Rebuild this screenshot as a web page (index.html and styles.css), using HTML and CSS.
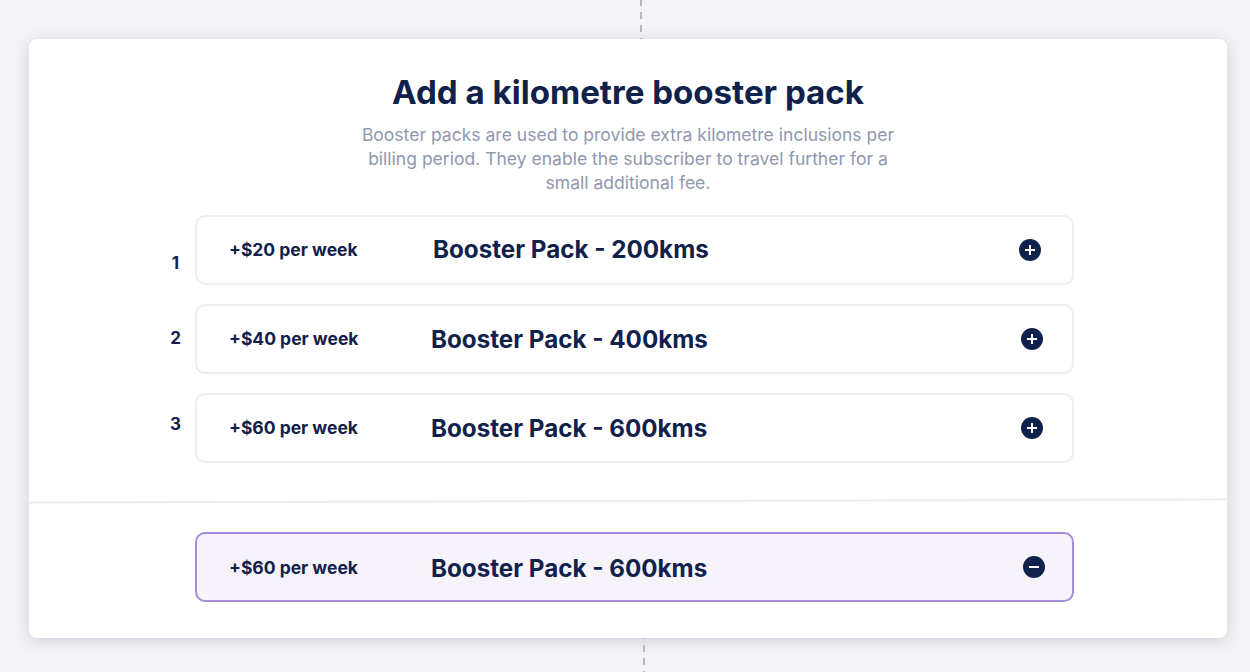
FILE: index.html
```html
<!DOCTYPE html>
<html lang="en">
<head>
    <meta charset="UTF-8">
    <meta name="viewport" content="width=device-width, initial-scale=1.0">
    <title>Add a kilometre booster pack</title>
    <link rel="stylesheet" href="styles.css">
</head>
<body>

    <div class="dash dash-top"></div>

    <div class="panel">
        <div class="panel-head">
            <h1>Add a kilometre booster pack</h1>
            <p>Booster packs are used to provide extra kilometre inclusions per billing period. They enable the subscriber to travel further for a small additional fee.</p>
        </div>

        <!-- Available packs -->
        <div class="pack-list">
            <div class="pack-row">
                <span class="pack-num num-1">1</span>
                <div class="pack pack-1">
                    <span class="pack-price">+$20 per week</span>
                    <span class="pack-name">Booster Pack - 200kms</span>
                    <svg class="pack-icon" viewBox="0 0 22 22"><circle cx="11" cy="11" r="11"/><path d="M11 6v10M6 11h10"/></svg>
                </div>
            </div>
            <div class="pack-row">
                <span class="pack-num num-2">2</span>
                <div class="pack">
                    <span class="pack-price">+$40 per week</span>
                    <span class="pack-name">Booster Pack - 400kms</span>
                    <svg class="pack-icon" viewBox="0 0 22 22"><circle cx="11" cy="11" r="11"/><path d="M11 6v10M6 11h10"/></svg>
                </div>
            </div>
            <div class="pack-row">
                <span class="pack-num num-3">3</span>
                <div class="pack">
                    <span class="pack-price">+$60 per week</span>
                    <span class="pack-name">Booster Pack - 600kms</span>
                    <svg class="pack-icon" viewBox="0 0 22 22"><circle cx="11" cy="11" r="11"/><path d="M11 6v10M6 11h10"/></svg>
                </div>
            </div>
        </div>

        <div class="divider"></div>

        <!-- Selected pack -->
        <div class="pack-row">
            <span class="pack-num"></span>
            <div class="pack selected">
                <span class="pack-price">+$60 per week</span>
                <span class="pack-name">Booster Pack - 600kms</span>
                <svg class="pack-icon" viewBox="0 0 22 22"><circle cx="11" cy="11" r="11"/><path d="M6 11h10"/></svg>
            </div>
        </div>
    </div>

    <div class="dash dash-bottom"></div>

</body>
</html>
```

FILE: styles.css
```css
html, body {
    height: 100%;
}
body {
    margin: 0;
    background-color: #f4f4f7;
    font-family: Inter, "Liberation Sans", sans-serif;
    color: #10214b;
    overflow: hidden;
}
h1, p {
    margin: 0;
}
.dash {
    width: 2px;
    background-image: linear-gradient(to bottom, #b4b7c4 7px, transparent 7px);
    background-size: 2px 13px;
}
.dash-top {
    height: 39px;
    margin-left: 640px;
    background-position: 0 -1px;
}
.dash-bottom {
    height: 34px;
    margin-left: 643px;
    background-position: 0 7px;
}
.panel {
    width: 1198px;
    height: 599px;
    margin-left: 29px;
    background-color: #fff;
    border-radius: 8px;
    box-shadow: 0 3px 16px rgba(50, 55, 90, 0.2);
}
.panel-head {
    width: 560px;
    margin-left: 319px;
    padding-top: 33px;
    text-align: center;
}
.panel-head h1 {
    font-size: 33.1px;
    line-height: 40px;
    font-weight: 700;
    white-space: nowrap;
}
.panel-head p {
    margin-top: 11px;
    padding: 0 12px;
    font-size: 17.55px;
    line-height: 24px;
    color: #8f98ae;
}
.pack-list {
    display: flex;
    flex-direction: column;
    gap: 19px;
    margin-top: 20px;
}
.pack-row {
    display: flex;
    height: 70px;
}
.pack-num {
    width: 166px;
    padding-right: 14px;
    box-sizing: border-box;
    text-align: right;
    font-size: 17px;
    font-weight: 700;
}
.num-1 { padding-top: 38px; padding-right: 16px; }
.num-2 { padding-top: 24px; }
.num-3 { padding-top: 21px; }
.pack {
    display: flex;
    align-items: center;
    box-sizing: border-box;
    width: 879px;
    padding-left: 32px;
    background-color: #fff;
    border: 2px solid #eeeef3;
    border-radius: 10px;
}
.pack-price {
    width: 202px;
    margin-bottom: 2px;
    font-size: 17.5px;
    font-weight: 700;
    white-space: nowrap;
}
.pack-name {
    width: 590px;
    font-size: 24.2px;
    font-weight: 700;
    white-space: nowrap;
}
.pack-icon {
    width: 22px;
    height: 22px;
    flex-shrink: 0;
}
.pack-icon circle {
    fill: #10214b;
}
.pack-icon path {
    fill: none;
    stroke: #fff;
    stroke-width: 2;
}
.pack-1 {
    padding-bottom: 1px;
}
.pack-1 .pack-price {
    margin-bottom: 0;
}
.pack-1 .pack-name {
    margin-left: 2px;
    width: 586px;
}
.selected {
    padding-top: 2px;
    background-color: #f6f3fb;
    border-color: #a48dd6;
}
.selected .pack-name {
    width: 592px;
}
.selected .pack-icon {
    margin-top: -3px;
}
.divider {
    height: 2px;
    margin: 37px 0 30px;
    background-color: #ebebf1;
    transform: rotate(-0.14deg);
}
```
